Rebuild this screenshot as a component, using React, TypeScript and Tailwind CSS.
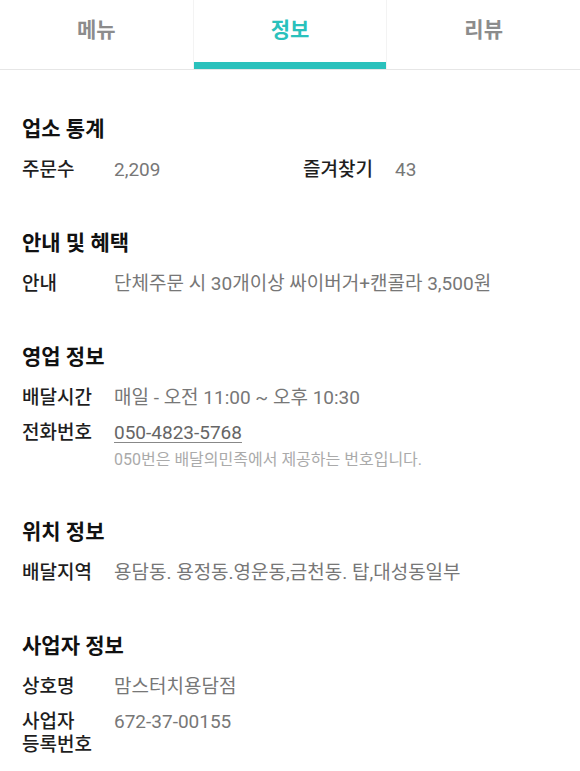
import React from 'react';

const FONT = "font-['Roboto','Noto_Sans_CJK_KR',sans-serif]";

const TABS = [
  { label: '메뉴', active: false },
  { label: '정보', active: true },
  { label: '리뷰', active: false },
];

function Row({ label, children }: { label: React.ReactNode; children: React.ReactNode }) {
  return (
    <div className="flex text-[19px] leading-[23px]">
      <div className="w-[92px] shrink-0 font-medium text-[#1e1e1e]">{label}</div>
      <div className="text-[#777] whitespace-nowrap">{children}</div>
    </div>
  );
}

function Section({ title, children }: { title: string; children: React.ReactNode }) {
  return (
    <section>
      <h2 className="text-[21px] leading-[28px] font-bold text-[#111]">{title}</h2>
      <div className="mt-[15px] flex flex-col gap-[12px]">{children}</div>
    </section>
  );
}

export default function App() {
  return (
    <div className={`${FONT} bg-white w-[580px] h-[771px] overflow-hidden`}>
      {/* 탭 */}
      <div className="flex h-[70px] border-b border-[#e6e6e6]">
        {TABS.map((t, i) => (
          <div
            key={t.label}
            className={`relative flex-1 flex items-start justify-center pt-[16px] ${i === 1 ? 'border-x border-[#f3f3f3]' : ''}`}
          >
            <span className={`text-[21px] leading-[28px] font-bold ${t.active ? 'text-[#2ac1bc]' : 'text-[#8c8c8c]'}`}>
              {t.label}
            </span>
            {t.active && <div className="absolute left-0 right-0 bottom-0 h-[7px] bg-[#2ac1bc]" />}
          </div>
        ))}
      </div>

      <div className="px-[22px] pt-[45px] flex flex-col gap-[48px]">
        <Section title="업소 통계">
          <div className="flex">
            <div className="w-[281px]">
              <Row label="주문수">2,209</Row>
            </div>
            <Row label="즐겨찾기">43</Row>
          </div>
        </Section>

        <Section title="안내 및 혜택">
          <Row label="안내">단체주문 시 30개이상 싸이버거+캔콜라 3,500원</Row>
        </Section>

        <Section title="영업 정보">
          <Row label="배달시간">매일 - 오전 11:00 ~ 오후 10:30</Row>
          <div>
            <Row label="전화번호">
              <span className="text-[#666] underline underline-offset-[3px] decoration-[#888]">050-4823-5768</span>
            </Row>
            <div className="mt-[6px] pl-[92px] text-[16px] leading-[20px] text-[#aaa]">
              050번은 배달의민족에서 제공하는 번호입니다.
            </div>
          </div>
        </Section>

        <Section title="위치 정보">
          <Row label="배달지역">용담동. 용정동.영운동,금천동. 탑,대성동일부</Row>
        </Section>

        <Section title="사업자 정보">
          <Row label="상호명">맘스터치용담점</Row>
          <Row label={<>사업자<br />등록번호</>}>672-37-00155</Row>
        </Section>
      </div>
    </div>
  );
}
